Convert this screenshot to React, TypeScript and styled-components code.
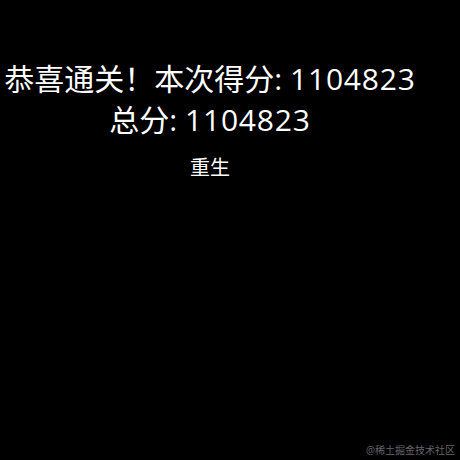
import styled, { createGlobalStyle } from 'styled-components';

const GlobalStyle = createGlobalStyle`
  html, body {
    margin: 0;
    padding: 0;
    background: #000;
  }
  body {
    font-family: "Open Sans", "Noto Sans CJK SC", sans-serif;
    color: #fff;
  }
`;

const Screen = styled.div`
  position: relative;
  width: 460px;
  height: 460px;
  background: #000;
  overflow: hidden;
`;

const Panel = styled.div`
  width: 420px;
  padding-top: 58px;
  display: flex;
  flex-direction: column;
  align-items: center;
`;

const Title = styled.div`
  font-size: 30px;
  line-height: 41px;
  white-space: nowrap;
  text-align: center;
`;

const Score = styled.span`
  letter-spacing: 0.8px;
`;

const Respawn = styled.button`
  margin-top: 14px;
  background: none;
  border: none;
  padding: 0;
  color: #fff;
  font-family: inherit;
  font-size: 20px;
  line-height: 28px;
  cursor: pointer;
`;

const Watermark = styled.div`
  position: absolute;
  right: 5px;
  bottom: 3px;
  font-size: 10px;
  line-height: 14px;
  color: #666;
`;

const App = () => {
  const score = 1104823;
  const total = 1104823;
  return (
    <Screen>
      <GlobalStyle />
      <Panel>
        <Title>
          恭喜通关！本次得分: <Score>{score}</Score>
        </Title>
        <Title>
          总分: <Score>{total}</Score>
        </Title>
        <Respawn>重生</Respawn>
      </Panel>
      <Watermark>@稀土掘金技术社区</Watermark>
    </Screen>
  );
};

export default App;
